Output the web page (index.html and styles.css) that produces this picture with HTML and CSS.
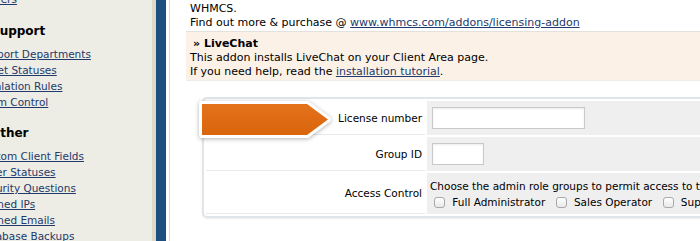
FILE: index.html
```html
<!DOCTYPE html>
<html lang="en">
<head>
    <meta charset="UTF-8">
    <meta name="viewport" content="width=device-width, initial-scale=1.0">
    <title>Addon Modules</title>
    <link rel="stylesheet" href="styles.css">
</head>
<body>
    <div class="page">
        <div class="sidebar">
            <div class="sidebar-inner">
                <a href="#" class="link">Servers</a>
                <h3>Support</h3>
                <a href="#" class="link">Support Departments</a>
                <a href="#" class="link">Ticket Statuses</a>
                <a href="#" class="link">Escalation Rules</a>
                <a href="#" class="link">Spam Control</a>
                <h3 class="other">Other</h3>
                <a href="#" class="link">Custom Client Fields</a>
                <a href="#" class="link">Order Statuses</a>
                <a href="#" class="link">Security Questions</a>
                <a href="#" class="link">Banned IPs</a>
                <a href="#" class="link">Banned Emails</a>
                <a href="#" class="link">Database Backups</a>
            </div>
        </div>
        <div class="blue-bar"></div>
        <div class="gap"></div>

        <div class="content">
            <p class="intro">WHMCS.<br>Find out more &amp; purchase @ <a href="#">www.whmcs.com/addons/licensing-addon</a></p>

            <div class="addon-box">
                <div class="addon-title">&raquo; LiveChat</div>
                <p>This addon installs LiveChat on your Client Area page.<br>
                If you need help, read the <a href="#">installation tutorial</a>.</p>
            </div>

            <div class="settings">
                <svg class="pointer" width="140" height="44" viewBox="0 0 140 44">
                    <defs>
                        <linearGradient id="orange" x1="0" y1="0" x2="0" y2="1">
                            <stop offset="0" stop-color="#e4721a"/>
                            <stop offset="1" stop-color="#d9650d"/>
                        </linearGradient>
                    </defs>
                    <polygon points="5,5 110,5 131,20.5 110,36 5,36" fill="url(#orange)" stroke="#fff" stroke-width="6" stroke-linejoin="round" paint-order="stroke"/>
                </svg>
                <table class="form">
                    <tr>
                        <td class="fieldlabel">License number</td>
                        <td class="fieldarea"><input type="text" class="input-wide"></td>
                    </tr>
                    <tr>
                        <td class="fieldlabel">Group ID</td>
                        <td class="fieldarea"><input type="text" class="input-small"></td>
                    </tr>
                    <tr>
                        <td class="fieldlabel tall">Access Control</td>
                        <td class="fieldarea access">
                            Choose the admin role groups to permit access to this module:<br>
                            <label><input type="checkbox"> Full Administrator</label>
                            <label><input type="checkbox"> Sales Operator</label>
                            <label><input type="checkbox"> Support Operator</label>
                        </td>
                    </tr>
                </table>
            </div>
        </div>
    </div>
</body>
</html>
```

FILE: styles.css
```css
*{
    margin: 0;
    padding: 0;
    box-sizing: border-box;
}
body {
    font-family: "DejaVu Sans", Verdana, sans-serif;
    font-size: 11px;
    color: #000;
    background: #fff;
    overflow: hidden;
}
a {
    color: #22396b;
}
.page {
    display: flex;
    width: 1100px;
    height: 241px;
    overflow: hidden;
}

/* left menu */
.sidebar {
    width: 156px;
    flex: none;
    background: #eeede5;
    border-right: 4px solid #dcd9ca;
    overflow: hidden;
}
.sidebar-inner {
    margin-top: -9px;
}
.sidebar .link {
    display: block;
    font-size: 10.5px;
    line-height: 16px;
    margin-left: -23px;
    white-space: nowrap;
}
.sidebar h3 {
    font-size: 12px;
    line-height: 16px;
    margin: 16px 0 7px -9px;
}
.sidebar h3.other {
    margin-top: 15px;
    margin-left: -10px;
}
.blue-bar {
    width: 10px;
    flex: none;
    background: #1c4e80;
}
.gap {
    width: 4px;
    flex: none;
    border-right: 1px solid #d6dde6;
}

/* main area */
.content {
    width: 900px;
    flex: none;
    padding: 2px 0 0 20px;
}
.intro {
    line-height: 14px;
}
.addon-box {
    margin: 1px 0 0 -4px;
    padding: 5px 0 1px 4px;
    background: #fcf1e6;
    border-top: 1px solid #e4e1dc;
    border-bottom: 1px solid #efebe6;
    line-height: 14px;
}
.addon-title {
    font-weight: bold;
    padding-left: 3px;
}

.settings {
    position: relative;
    margin: 16px 0 0 12px;
    border: 2px solid #e0e5ea;
    border-radius: 5px;
    box-shadow: 0 1px 2px rgba(0, 0, 0, 0.08);
}
.pointer {
    position: absolute;
    left: -7px;
    top: 0;
    filter: drop-shadow(0 1px 2px rgba(0, 0, 0, 0.3));
}
.form {
    border-collapse: separate;
    border-spacing: 2px;
    width: 100%;
    font-size: 10.5px;
}
.fieldlabel {
    width: 219px;
    height: 34px;
    text-align: right;
    padding-right: 3px;
    border-bottom: 1px solid #e6eaee;
    background: #fff;
    vertical-align: middle;
}
.fieldlabel.tall {
    height: 41px;
}
.fieldarea {
    background: #efefef;
    padding: 0 5px;
    vertical-align: middle;
}
.fieldarea input[type=text] {
    height: 22px;
    border: 1px solid #c9c9c9;
    box-shadow: inset 0 1px 2px rgba(0, 0, 0, 0.08);
    background: #fff;
    display: block;
}
.input-wide {
    width: 153px;
}
.input-small {
    width: 52px;
}
.access {
    padding: 4px 0 4px 3px;
    line-height: 16px;
    white-space: nowrap;
}
.access label {
    margin-right: 3px;
}
.access input[type=checkbox] {
    appearance: none;
    -webkit-appearance: none;
    width: 11px;
    height: 11px;
    margin: 0 4px 0 4px;
    vertical-align: -2px;
    border: 1px solid #a9a9a9;
    border-radius: 3px;
    background: linear-gradient(#fff, #e8e8e8);
}
```
